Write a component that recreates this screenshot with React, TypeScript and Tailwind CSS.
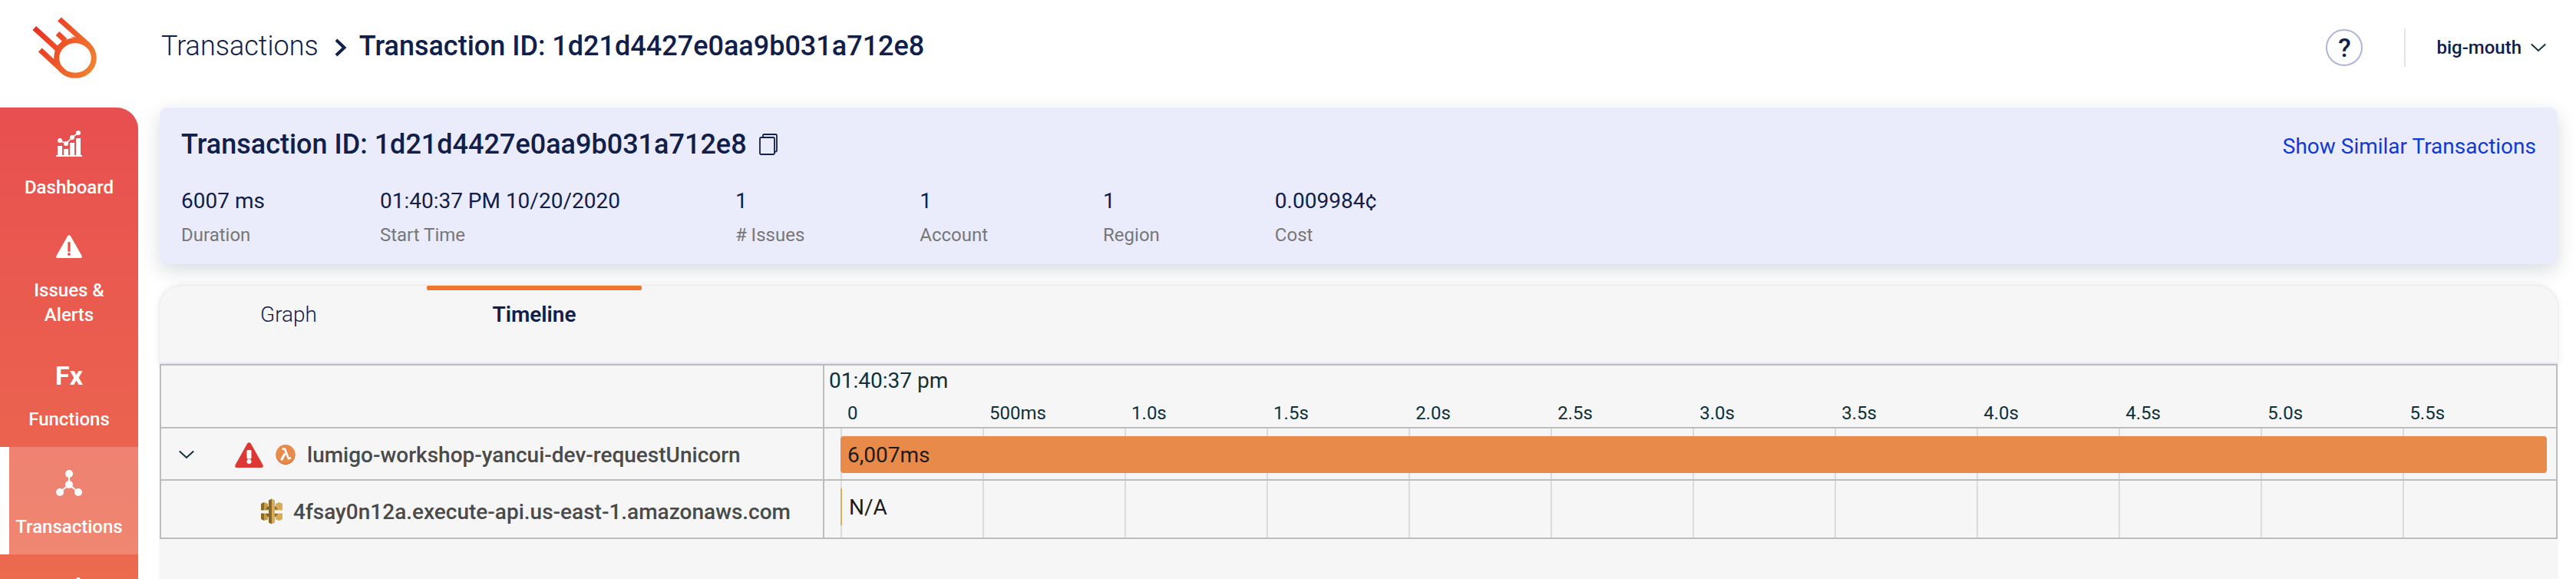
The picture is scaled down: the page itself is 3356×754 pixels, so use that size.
import type { ReactNode } from "react";

const details = [
  { value: "6007 ms", label: "Duration" },
  { value: "01:40:37 PM 10/20/2020", label: "Start Time" },
  { value: "1", label: "# Issues" },
  { value: "1", label: "Account" },
  { value: "1", label: "Region" },
  { value: "0.009984¢", label: "Cost" },
];

const ticks = ["0", "500ms", "1.0s", "1.5s", "2.0s", "2.5s", "3.0s", "3.5s", "4.0s", "4.5s", "5.0s", "5.5s"];

function Logo() {
  return (
    <svg viewBox="40 20 88 84" className="h-[84px] w-[88px]" fill="none" stroke="url(#logo-gradient)" strokeWidth="7" aria-hidden="true">
      <defs>
        <linearGradient id="logo-gradient" gradientUnits="userSpaceOnUse" x1="44" y1="40" x2="126" y2="80">
          <stop offset="0" stopColor="#e92f22" />
          <stop offset="1" stopColor="#f08030" />
        </linearGradient>
      </defs>
      <ellipse cx="98" cy="75.5" rx="24.3" ry="22.8" />
      <path d="M77.5 25 116 59.5" />
      <path d="M44.800 36.500 77 66" />
      <path d="M75 43.500 85 52.800" />
      <path d="M52.300 65 82 92.500" />
      <path d="M92 47.500 C101 48.200 108 52 114 59 L100 52Z" stroke="none" fill="url(#logo-gradient)" />
      <path d="M72 65 Q70 72 71.500 80 L76 82 76 68Z" stroke="none" fill="url(#logo-gradient)" />
      <path d="M73 61 82 52.500 86 56 78 66Z" stroke="none" fill="url(#logo-gradient)" />
    </svg>
  );
}

function ChartIcon() {
  return (
    <svg viewBox="0 0 34 34" className="size-[34px]" fill="#fff" aria-hidden="true">
      <path d="M0 32h34v2H0zM2 20h6v13H2zM10 24h6v9h-6zM18 16h6v17h-6zM26 10h6v23h-6z" />
      <path d="M5 13 13 17 21 9 29 3" fill="none" stroke="#fff" strokeWidth="1.600" />
      <circle cx="5" cy="13" r="3" />
      <circle cx="13" cy="17" r="3" />
      <circle cx="21" cy="9" r="3" />
      <circle cx="29" cy="3" r="3" />
    </svg>
  );
}

function WarningIcon() {
  return (
    <svg viewBox="0 0 34 34" className="size-[34px]" aria-hidden="true">
      <path d="M15 3.500Q17 .5 19 3.500L33.500 29Q34.800 32 31.500 32H2.500Q-.8 32 .5 29Z" fill="#fff" />
      <path d="M17 12.500v10" stroke="#e9554f" strokeWidth="3.400" strokeLinecap="round" />
      <circle cx="17" cy="27" r="2" fill="#e9554f" />
    </svg>
  );
}

function NodesIcon() {
  return (
    <svg viewBox="0 0 34 34" className="size-[34px]" fill="#fff" aria-hidden="true">
      <path d="M17 5V19L5 29M17 19 29 29" fill="none" stroke="#fff" strokeWidth="2" />
      <circle cx="17" cy="5" r="5" />
      <circle cx="17" cy="19" r="5" />
      <circle cx="5" cy="29" r="5" />
      <circle cx="29" cy="29" r="5" />
    </svg>
  );
}

function ChevronDown() {
  return (
    <svg viewBox="0 0 20 12" className="h-[12px] w-[20px] shrink-0" fill="none" stroke="#10303a" strokeWidth="2" aria-hidden="true">
      <path d="M.8 1.500 10 10 19.200 1.500" />
    </svg>
  );
}

function ErrorIcon() {
  return (
    <svg viewBox="0 0 37 33" className="h-[33px] w-[37px]" aria-hidden="true">
      <path d="M16.200 1.500Q18.500-1.200 20.800 1.500L36.500 29.500Q37.600 33 34 33H3Q-.6 33 .5 29.500Z" fill="#dc3936" />
      <rect x="15.500" y="10" width="6" height="11.500" rx="1.500" fill="#fff" />
      <circle cx="18.500" cy="25" r="3" fill="#fff" />
    </svg>
  );
}

function LambdaIcon() {
  return (
    <svg viewBox="0 0 26 26" className="size-[26px]" fill="none" aria-hidden="true">
      <circle cx="13" cy="13.500" r="12.500" fill="#b5622b" />
      <circle cx="13" cy="12.600" r="12.500" fill="#e88b4a" />
      <path d="M8.500 5.700H12L17 18.200 20 17.300" stroke="#fff" strokeWidth="2.700" />
      <path d="M12.300 11.500 7.500 20.300" stroke="#fff" strokeWidth="3" />
    </svg>
  );
}

function GatewayIcon() {
  return (
    <svg viewBox="0 0 28 34" className="h-[34px] w-[28px]" aria-hidden="true">
      <path d="M0 7 4 5V15.500H0zM0 19.500H4V29L0 27z" fill="#8a6a2c" />
      <path d="M4 5 9 7V10.500H12V13L9 15.500H4zM4 19.500H9L12 21V24H9V27.500L4 29z" fill="#c79b45" />
      <path d="M9 10.500h3v4H6zM9 24h3v-4H6z" fill="#7c6029" />
      <path d="M28 7 24 5 19 7V10.500H15V13L19 15.500H28zM28 19.500H19L15 21V24H19V27.500L24 29 28 27z" fill="#d8ac55" />
      <path d="M19 10.500h-3v4h6zM19 24h-3v-4h6z" fill="#8a6a2c" />
      <path d="M10 2.500 14 .5V33.500L10 31.500z" fill="#846630" />
      <path d="M18 2.500 14 .5V33.500L18 31.500z" fill="#d8ac55" />
    </svg>
  );
}

function NavItem({ icon, label, active, compact }: { icon: ReactNode; label?: string; active?: boolean; compact?: boolean }) {
  const spacing = compact ? "pt-6 pb-4" : "pt-[30px] pb-5";
  const tone = active ? "bg-white/20 shadow-[inset_12px_0_0_#fff]" : "";
  return (
    <a
      href="#"
      aria-current={active ? "page" : undefined}
      className={`flex shrink-0 flex-col items-center gap-6 px-4 text-center text-2xl leading-[32px] font-medium text-white ${spacing} ${tone}`}
    >
      <span className="flex h-[34px] items-center justify-center">{icon}</span>
      {label && <span>{label}</span>}
    </a>
  );
}

function TimelineCell({ height, children }: { height: string; children: ReactNode }) {
  return (
    <td className="border-b-2 border-[#bdbdbd] p-0">
      <div className={`grid pr-3 pl-[21px] ${height}`}>
        <div className="col-start-1 row-start-1 grid grid-cols-[repeat(11,500fr)_507fr]" aria-hidden="true">
          {ticks.map((t) => (
            <span key={t} className="border-l-2 border-[#dcdcdc]" />
          ))}
        </div>
        <div className="col-start-1 row-start-1 pt-[10px]">{children}</div>
      </div>
    </td>
  );
}

export default function App() {
  return (
    <div className="flex h-screen flex-col overflow-hidden bg-white font-['Roboto',sans-serif] text-[#10204a]">
      <header className="flex h-[140px] shrink-0 items-start">
        <a href="#" aria-label="Home" className="w-[210px] shrink-0 pt-5 pl-10">
          <Logo />
        </a>
        <nav aria-label="Breadcrumb" className="flex items-center pt-9 text-4xl leading-[48px]">
          <a href="#" className="font-light">Transactions</a>
          <svg viewBox="0 0 16 24" className="mt-[3px] mr-4 ml-[21px] h-[24px] w-[16px]" fill="none" stroke="#10204a" strokeWidth="4" aria-hidden="true">
            <path d="M2 2 12.500 12 2 22" />
          </svg>
          <span className="font-medium">Transaction ID: 1d21d4427e0aa9b031a712e8</span>
        </nav>
        <div className="ml-auto flex h-[88px] items-center pt-9 pr-[39px]">
          <button type="button" aria-label="Help" className="flex size-[48px] items-center justify-center rounded-full border-2 border-[#aeb5dd] text-[34px] leading-none font-medium">
            ?
          </button>
          <span className="ml-[54px] h-[50px] w-[2px] bg-[#e4e4e8]" />
          <button type="button" className="ml-10 flex items-center gap-3 text-2xl font-medium">
            big-mouth
            <ChevronDown />
          </button>
        </div>
      </header>

      <div className="flex min-h-0 flex-1">
        <nav aria-label="Main" className="flex w-[180px] shrink-0 flex-col overflow-hidden rounded-tr-[28px] bg-linear-to-b from-[#e84f50] to-[#ec6a4e]">
          <NavItem icon={<ChartIcon />} label="Dashboard" />
          <NavItem icon={<WarningIcon />} label="Issues & Alerts" compact />
          <NavItem icon={<span className="text-[34px] font-bold">Fx</span>} label="Functions" />
          <NavItem icon={<NodesIcon />} label="Transactions" active />
          <NavItem icon={<ChartIcon />} />
        </nav>

        <main className="flex min-w-0 flex-1 flex-col gap-7 pr-6 pl-7">
          <section className="relative h-[204px] shrink-0 rounded-[10px] bg-[#ebecfb] px-7 pt-6 shadow-[0_8px_24px_rgba(20,30,60,0.16)]">
            <div className="flex items-start justify-between">
              <div className="flex items-center gap-4">
                <h1 className="text-4xl leading-[48px] font-medium">Transaction ID: 1d21d4427e0aa9b031a712e8</h1>
                <button type="button" aria-label="Copy transaction ID">
                  <svg viewBox="0 0 24 28" className="h-[28px] w-[24px]" fill="none" stroke="#10204a" strokeWidth="1.800" aria-hidden="true">
                    <rect x="1" y="5" width="19" height="22" rx="1.500" />
                    <path d="M5 4.500V2.500Q5 1 6.500 1H21.500Q23 1 23 2.500V22Q23 23.300 21.500 23.500H20.500" />
                  </svg>
                </button>
              </div>
              <a href="#" className="pt-2 text-[28px] leading-[38px] text-[#1238d6]">Show Similar Transactions</a>
            </div>
            <dl className="mt-[34px] flex gap-[150px]">
              {details.map((d) => (
                <div key={d.label} className="flex flex-col-reverse gap-3">
                  <dt className="text-2xl leading-[32px] text-[#777]">{d.label}</dt>
                  <dd className="text-[28px] leading-[32px]">{d.value}</dd>
                </div>
              ))}
            </dl>
          </section>

          <section className="flex flex-1 flex-col rounded-t-[28px] bg-[#f6f6f6] shadow-[0_0_2px_rgba(0,0,0,0.1)]">
            <div role="tablist" className="flex h-[102px] shrink-0 gap-10 rounded-t-[28px] border-b-2 border-[#e6e6ef] bg-[#f6f6f6] px-7 text-[28px] leading-[36px] shadow-[0_0_10px_rgba(0,0,0,0.1)]">
              <button type="button" role="tab" aria-selected="false" className="flex w-[280px] justify-center pt-5 font-light">
                Graph
              </button>
              <button type="button" role="tab" aria-selected="true" className="flex w-[280px] flex-col items-center gap-[14px] font-semibold">
                <span className="h-[6px] w-full rounded-[2px] bg-[#ee7730]" />
                Timeline
              </button>
            </div>

            <table className="w-full table-fixed border-separate border-spacing-0 border-2 border-b-0 border-[#bdbdbd] bg-[#f6f6f6]">
              <colgroup>
                <col className="w-[864px]" />
                <col />
              </colgroup>
              <thead>
                <tr>
                  <td className="border-r-2 border-b-2 border-[#bdbdbd] p-0" />
                  <th scope="col" className="border-b-2 border-[#bdbdbd] p-0 text-left font-normal text-[#10303a]">
                    <div className="flex h-[80px] flex-col gap-2 pt-[2px]">
                      <div className="pl-[6px] text-[28px] leading-[36px]">01:40:37 pm</div>
                      <div className="grid grid-cols-[repeat(11,500fr)_507fr] pr-3 pl-[21px] text-2xl leading-[32px]">
                        {ticks.map((t) => (
                          <span key={t} className="pl-[9px]">{t}</span>
                        ))}
                      </div>
                    </div>
                  </th>
                </tr>
              </thead>
              <tbody className="text-[28px]">
                <tr>
                  <th scope="row" className="border-r-2 border-b-2 border-[#bdbdbd] p-0 font-medium text-[#4a4a4a]">
                    <div className="flex h-[66px] items-center pt-[2px] pl-[23px]">
                      <button type="button" aria-label="Collapse row" className="mr-[53px]">
                        <ChevronDown />
                      </button>
                      <ErrorIcon />
                      <span className="mr-[15px] ml-4">
                        <LambdaIcon />
                      </span>
                      <span className="pt-[2px]">lumigo-workshop-yancui-dev-requestUnicorn</span>
                    </div>
                  </th>
                  <TimelineCell height="h-[66px]">
                    <div className="h-[48px] rounded-[4px] bg-[#e88b4a] pl-[9px] leading-[50px] text-[#1c1c1c]">6,007ms</div>
                  </TimelineCell>
                </tr>
                <tr>
                  <th scope="row" className="border-r-2 border-b-2 border-[#bdbdbd] p-0 font-medium text-[#4a4a4a]">
                    <div className="flex h-[74px] items-center gap-[14px] pt-[6px] pl-[130px]">
                      <GatewayIcon />
                      <span className="pt-[2px]">4fsay0n12a.execute-api.us-east-1.amazonaws.com</span>
                    </div>
                  </th>
                  <TimelineCell height="h-[74px]">
                    <div className="h-[48px] border-l-2 border-[#d9b25a] pl-[9px] leading-[50px] text-[#1c1c1c]">N/A</div>
                  </TimelineCell>
                </tr>
              </tbody>
            </table>
          </section>
        </main>
      </div>
    </div>
  );
}
